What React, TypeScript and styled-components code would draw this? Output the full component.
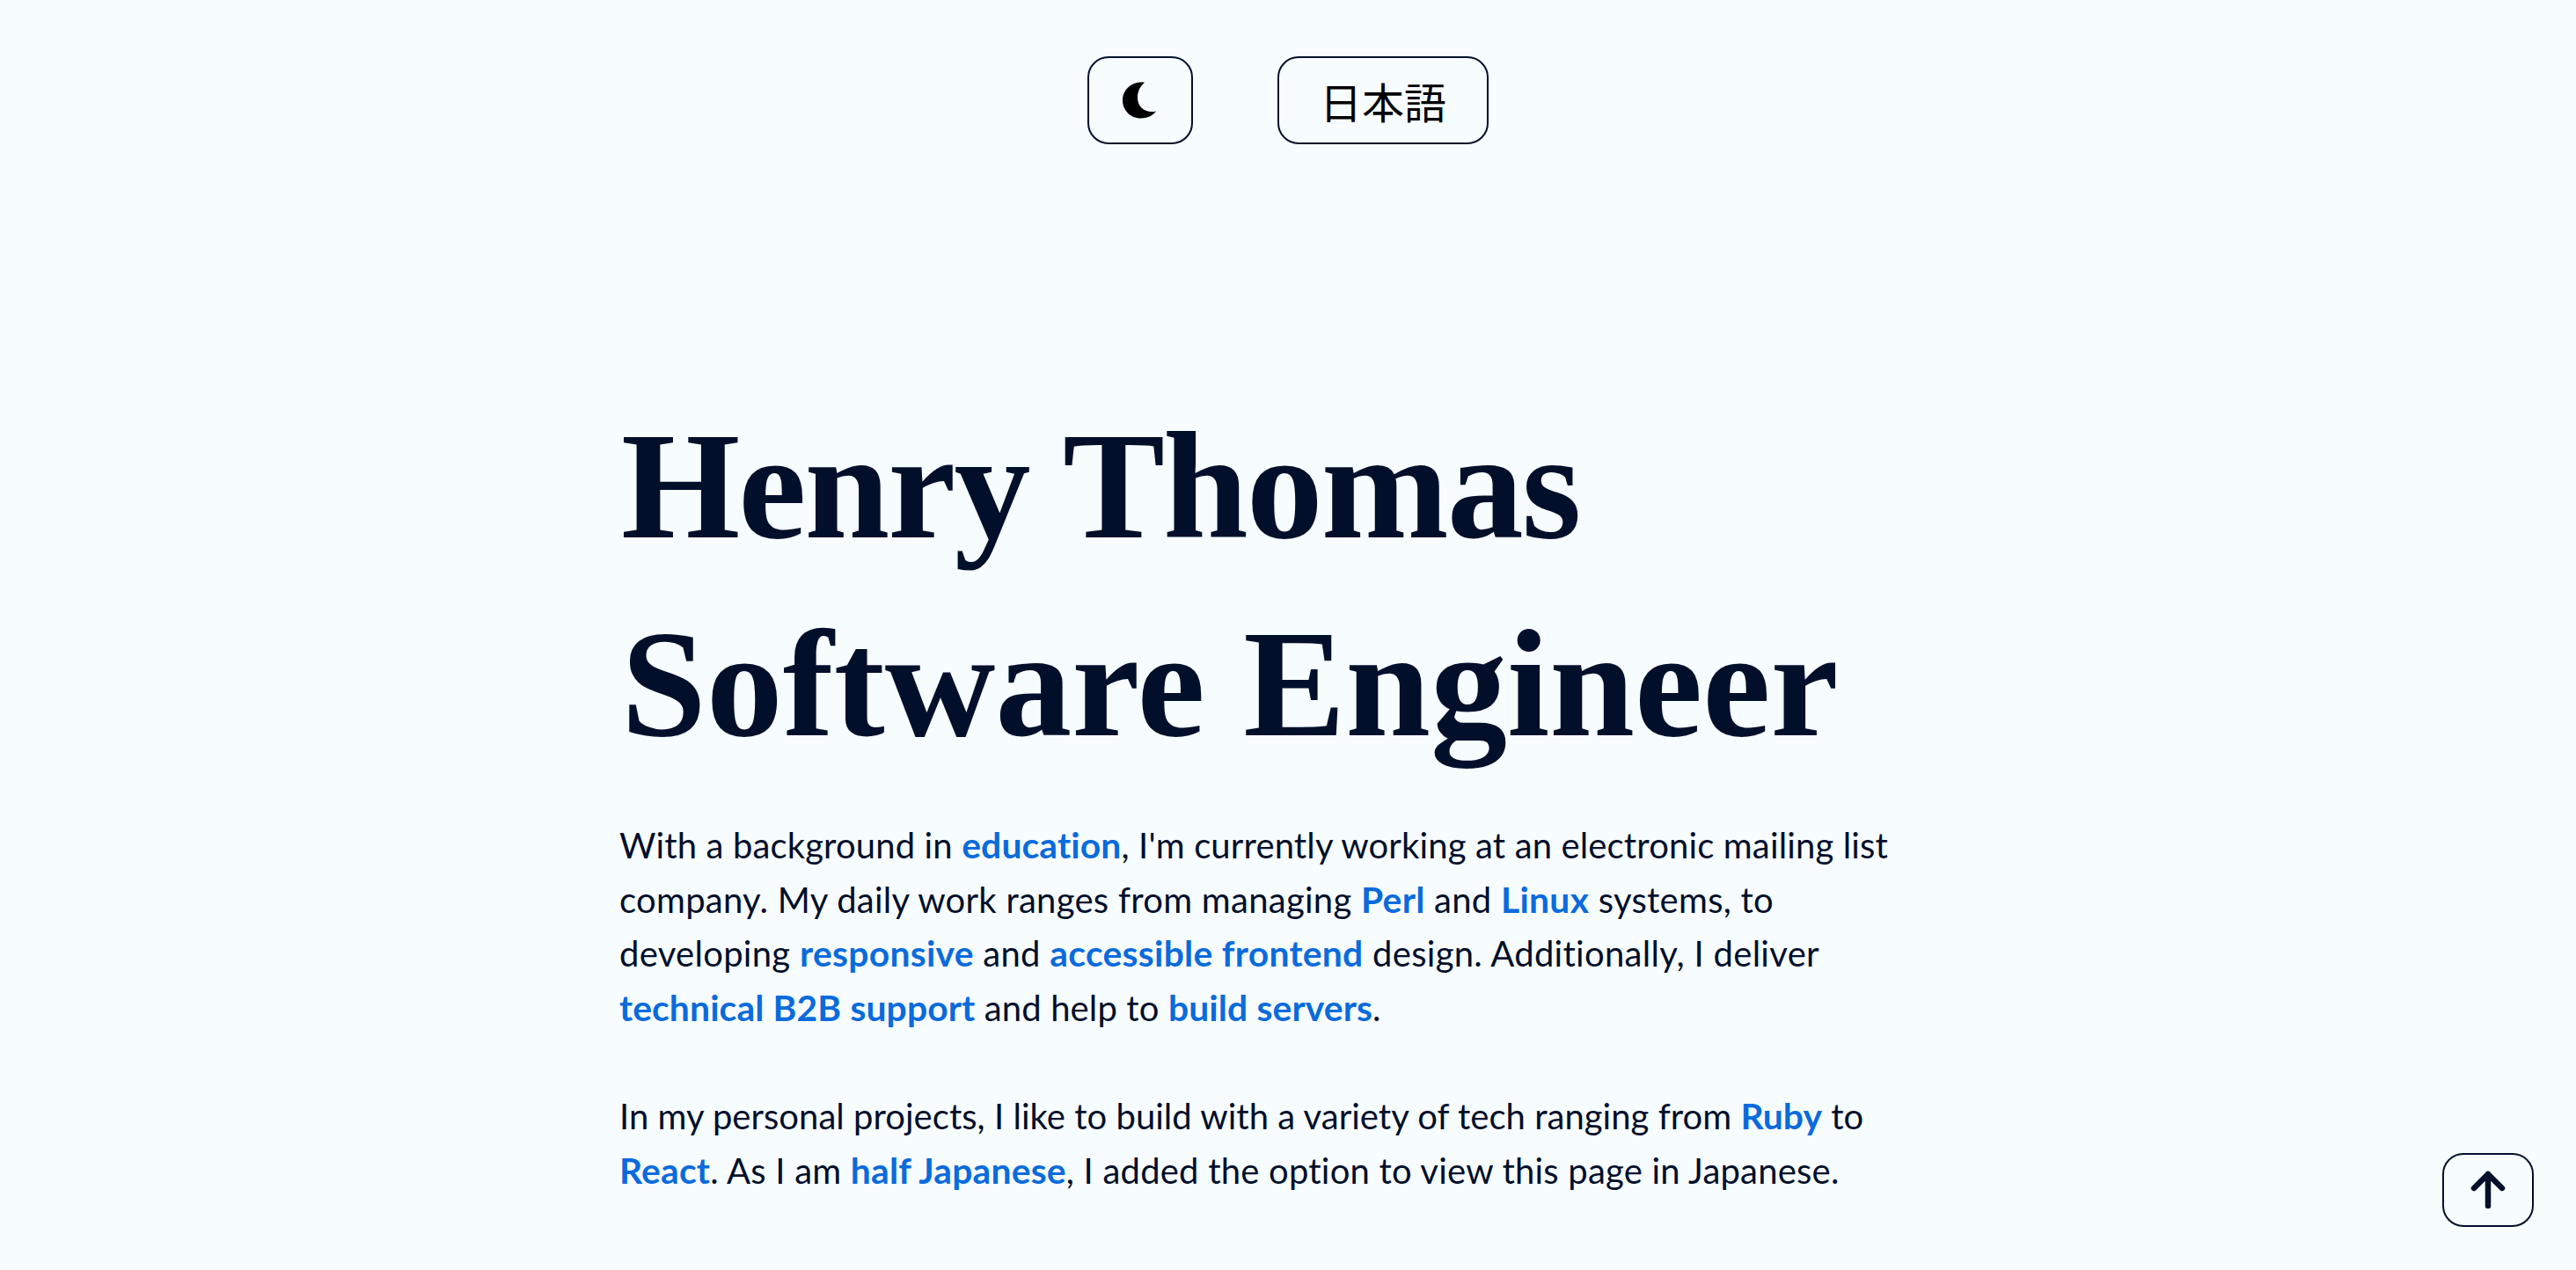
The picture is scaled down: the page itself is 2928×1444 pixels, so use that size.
import React from "react";
import styled, { createGlobalStyle } from "styled-components";

const Global = createGlobalStyle`
  html, body { margin: 0; padding: 0; background: #f7fcff; }
  body { height: 1444px; overflow: hidden; }
`;

const Page = styled.div`
  display: flex;
  flex-direction: column;
  align-items: center;
  padding-top: 64px;
  color: #020f2b;
`;

const Toolbar = styled.nav`
  display: flex;
  gap: 96px;
`;

const ToolButton = styled.button<{ $wide?: boolean }>`
  display: flex;
  align-items: center;
  justify-content: center;
  box-sizing: border-box;
  width: ${(p) => (p.$wide ? "240px" : "120px")};
  height: 100px;
  padding: 0;
  background: transparent;
  border: 2px solid #020f2b;
  border-radius: 24px;
  color: #000;
  font-family: "Noto Sans CJK JP", sans-serif;
  font-size: 48px;
`;

const Main = styled.main`
  box-sizing: border-box;
  width: 1520px;
  margin-top: 276px;
`;

const Heading = styled.h1`
  margin: 0 0 41px;
  padding-left: 2px;
  font-family: "Liberation Serif", serif;
  font-weight: 700;
  font-size: 174px;
  line-height: 225px;
  white-space: nowrap;
`;

const HeadingLine = styled.span<{ $spacing?: number }>`
  display: block;
  letter-spacing: ${(p) => p.$spacing ?? 0}px;
`;

const Paragraph = styled.p`
  margin: 0 0 61.6px;
  font-family: "Lato", sans-serif;
  font-size: 40px;
  line-height: 61.6px;
  color: #020f2b;
  white-space: nowrap;
`;

const Line = styled.span<{ $spacing?: number }>`
  display: block;
  letter-spacing: ${(p) => p.$spacing ?? 0}px;
`;

const Link = styled.a`
  color: #0a6bdc;
  font-size: 40.8px;
  line-height: 0;
  font-weight: 700;
  text-decoration: none;
`;

const TopButton = styled.button`
  position: fixed;
  right: 48px;
  bottom: 49px;
  display: flex;
  align-items: center;
  justify-content: center;
  box-sizing: border-box;
  width: 104px;
  height: 84px;
  padding: 0;
  background: transparent;
  border: 2px solid #020f2b;
  border-radius: 24px;
`;

const MoonIcon = () => (
  <svg width="42" height="42" viewBox="0 0 42 42" aria-hidden="true">
    <path
      fill="#000"
      d="M26 .8C13-1 1 8 1 21c0 11.500 9 20.500 20.500 20.500 7.500 0 14-3 17.500-8-12 2.500-21-4.500-21-15.500 0-7 3-13 8-17.200z"
    />
  </svg>
);

const ArrowIcon = () => (
  <svg width="40" height="44" viewBox="0 0 40 44" fill="none" aria-hidden="true">
    <path
      d="M20 40V4M4 20 20 4l16 16"
      stroke="#020f2b"
      strokeWidth="6.500"
      strokeLinecap="round"
      strokeLinejoin="round"
    />
  </svg>
);

export default function App() {
  return (
    <Page>
      <Global />
      <Toolbar>
        <ToolButton aria-label="Toggle theme">
          <MoonIcon />
        </ToolButton>
        <ToolButton $wide>日本語</ToolButton>
      </Toolbar>
      <Main>
        <Heading>
          <HeadingLine $spacing={-2}>Henry Thomas</HeadingLine>
          <HeadingLine>Software Engineer</HeadingLine>
        </Heading>
        <Paragraph>
          <Line $spacing={0.14}>
            With a background in <Link>education</Link>, I'm currently working at an electronic mailing list
          </Line>
          <Line $spacing={0.27}>
            company. My daily work ranges from managing <Link>Perl</Link> and <Link>Linux</Link> systems, to
          </Line>
          <Line $spacing={0.29}>
            developing <Link>responsive</Link> and <Link>accessible frontend</Link> design. Additionally, I deliver
          </Line>
          <Line $spacing={0.13}>
            <Link>technical B2B support</Link> and help to <Link>build servers</Link>.
          </Line>
        </Paragraph>
        <Paragraph>
          <Line $spacing={0.03}>
            In my personal projects, I like to build with a variety of tech ranging from <Link>Ruby</Link> to
          </Line>
          <Line $spacing={0.21}>
            <Link>React</Link>. As I am <Link>half Japanese</Link>, I added the option to view this page in Japanese.
          </Line>
        </Paragraph>
      </Main>
      <TopButton aria-label="Back to top">
        <ArrowIcon />
      </TopButton>
    </Page>
  );
}
